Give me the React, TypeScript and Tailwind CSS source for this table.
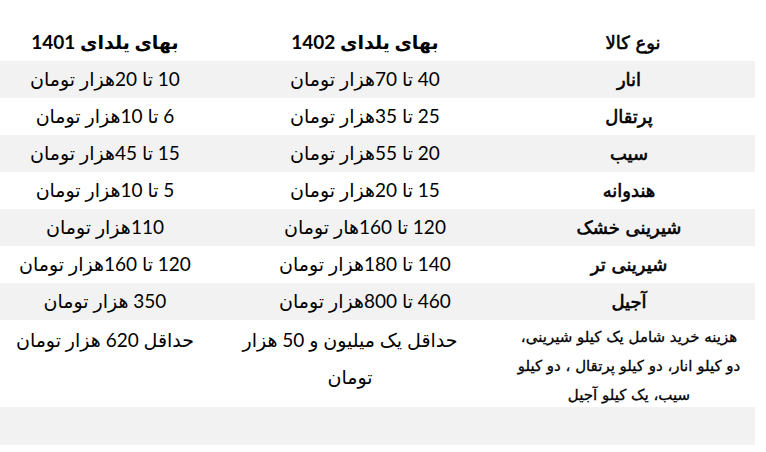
const rows = [
  ["انار", "40 تا 70هزار تومان", "10 تا 20هزار تومان"],
  ["پرتقال", "25 تا 35هزار تومان", "6 تا 10هزار تومان"],
  ["سیب", "20 تا 55هزار تومان", "15 تا 45هزار تومان"],
  ["هندوانه", "15 تا 20هزار تومان", "5 تا 10هزار تومان"],
  ["شیرینی خشک", "120 تا 160هار تومان", "110هزار تومان"],
  ["شیرینی تر", "140 تا 180هزار تومان", "120 تا 160هزار تومان"],
  ["آجیل", "460 تا 800هزار تومان", "350 هزار تومان"],
];

// item names: regular weight thickened with a stroke
const nameCell = "w-[252px] text-center font-['DejaVu_Sans',sans-serif] text-[18px] [-webkit-text-stroke:0.6px_black]";

const App = () => {
  return (
    <div className="w-[766px] h-[452px] bg-white pt-[24px] font-['Lato','DejaVu_Sans',sans-serif] text-[19px] text-black">
      <div dir="rtl" className="w-[755px]">
        <div className="flex h-[37px] items-center">
          <div className={`${nameCell} pl-[8px]`}>نوع کالا</div>
          <div className="w-[293px] pl-[17px] text-center font-bold">بهای یلدای 1402</div>
          <div className="w-[210px] text-center font-bold">بهای یلدای 1401</div>
        </div>

        {rows.map(([name, p1402, p1401], i) => (
          <div
            key={name}
            className={`flex h-[37px] items-center ${i % 2 === 0 ? "bg-[#f2f2f2]" : "bg-white"}`}
          >
            <div className={nameCell}>{name}</div>
            <div className="w-[293px] pl-[17px] text-center">{p1402}</div>
            <div className="w-[210px] text-center">{p1401}</div>
          </div>
        ))}

        <div className="flex h-[87px] items-start bg-white">
          <div className="w-[252px] px-[14px] pt-[3px] text-center font-['DejaVu_Sans',sans-serif] text-[15px] leading-[29px] [-webkit-text-stroke:0.3px_black]">
            هزینه خرید شامل یک کیلو شیرینی، دو کیلو انار، دو کیلو پرتقال ، دو کیلو سیب، یک کیلو آجیل
          </div>
          <div className="w-[293px] pl-[17px] pr-[30px] pt-[1px] text-center leading-[37px]">
            حداقل یک میلیون و 50 هزار تومان
          </div>
          <div className="w-[210px] pt-[1px] text-center leading-[37px]">حداقل 620 هزار تومان</div>
        </div>

        <div className="h-[38px] bg-[#f2f2f2]" />
      </div>
    </div>
  );
};

export default App;
